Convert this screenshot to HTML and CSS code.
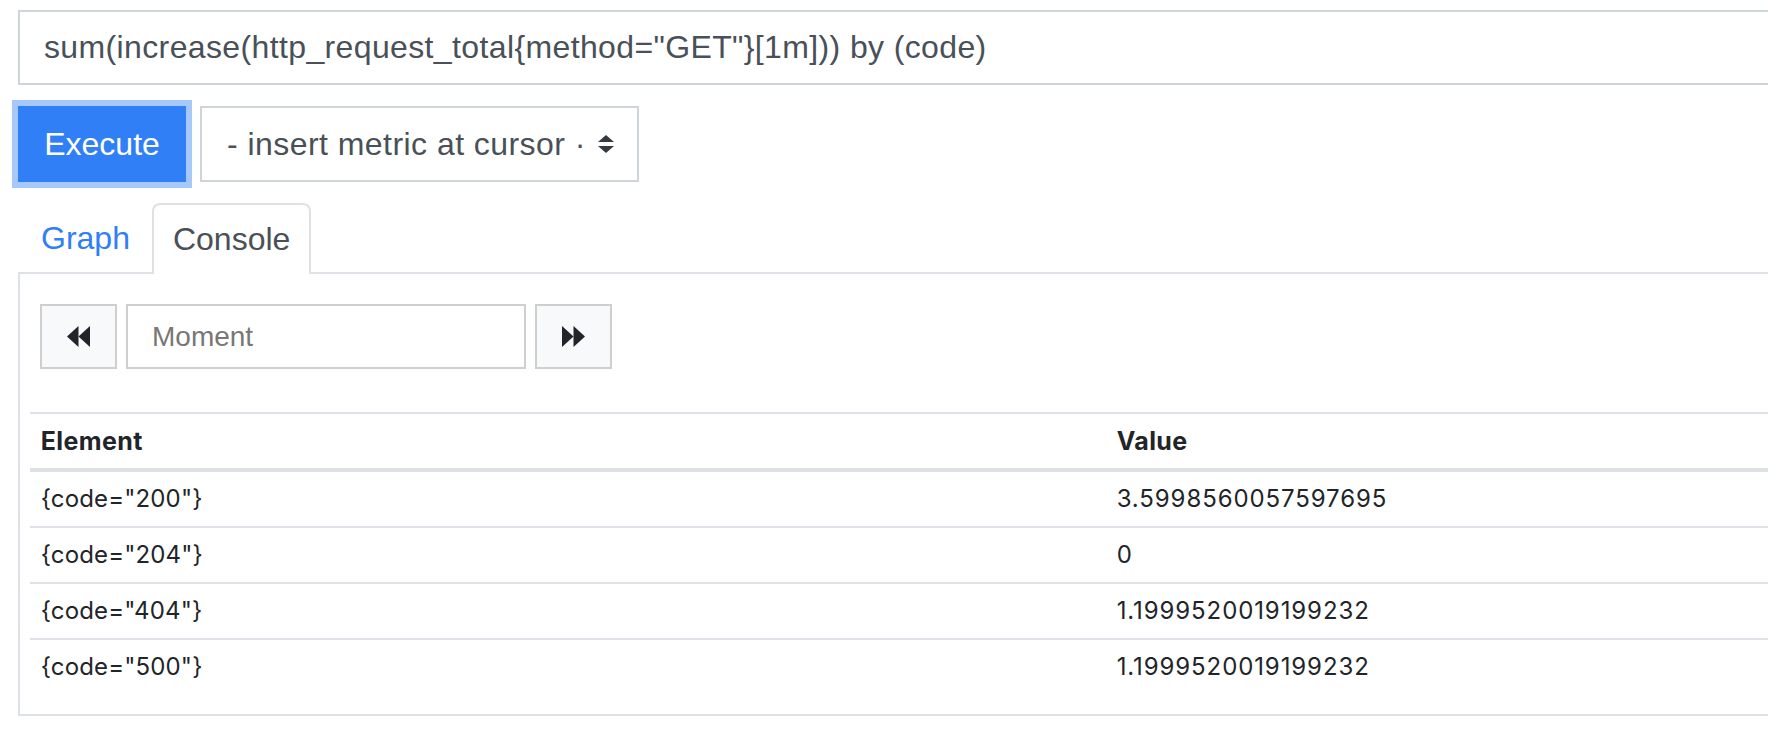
FILE: index.html
```html
<!DOCTYPE html>
<html lang="en">
<head>
<meta charset="utf-8">
<title>Console</title>
<link rel="stylesheet" href="styles.css">
</head>
<body>
<div class="page">
  <div class="query">sum(increase(http_request_total{method="GET"}[1m])) by (code)</div>
  <div class="controls">
    <button class="btn-exec">Execute</button>
    <div class="select">
      <span class="select-text">- insert metric at cursor ·</span>
      <svg class="select-arrows" width="16" height="18" viewBox="0 0 16 18"><polygon points="0,7 8,0 16,7" fill="#343a40"/><polygon points="0,11 16,11 8,18" fill="#343a40"/></svg>
    </div>
  </div>
  <div class="tabs">
    <a class="tab">Graph</a>
    <a class="tab active">Console</a>
  </div>
  <div class="panel">
    <div class="moment-row">
      <button class="nav-btn"><svg width="23" height="21" viewBox="0 0 23 21"><polygon points="0,10.5 11.5,0 11.5,21" fill="#212529"/><polygon points="11.5,10.5 23,0 23,21" fill="#212529"/></svg></button>
      <div class="moment">Moment</div>
      <button class="nav-btn"><svg width="23" height="21" viewBox="0 0 23 21"><polygon points="23,10.5 11.5,0 11.5,21" fill="#212529"/><polygon points="11.5,10.5 0,0 0,21" fill="#212529"/></svg></button>
    </div>
    <table class="results">
      <thead>
        <tr><th class="col-el">Element</th><th>Value</th></tr>
      </thead>
      <tbody>
        <tr><td>{code="200"}</td><td class="num">3.5998560057597695</td></tr>
        <tr><td>{code="204"}</td><td class="num">0</td></tr>
        <tr><td>{code="404"}</td><td class="num">1.1999520019199232</td></tr>
        <tr><td>{code="500"}</td><td class="num">1.1999520019199232</td></tr>
      </tbody>
    </table>
  </div>
</div>
</body>
</html>
```
FILE: styles.css
```css
html, body {
  margin: 0;
  padding: 0;
  overflow: hidden;
  background: #fff;
}
body {
  font-family: "Liberation Sans", Arial, sans-serif;
  color: #212529;
}
.page {
  width: 2300px;
  padding: 10px 0 0 18px;
  box-sizing: border-box;
}
.query {
  height: 75px;
  box-sizing: border-box;
  border: 2px solid #ced4da;
  padding: 0 24px;
  display: flex;
  align-items: center;
  font-size: 32px;
  letter-spacing: 0.37px;
  color: #495057;
  white-space: nowrap;
}
.controls {
  display: flex;
  margin-top: 21px;
  height: 76px;
}
.btn-exec {
  width: 168px;
  height: 76px;
  box-sizing: border-box;
  border: 2px solid #307ff6;
  background: #307ff6;
  color: #fff;
  font-family: "Liberation Sans", Arial, sans-serif;
  font-size: 32px;
  padding: 0 24px;
  box-shadow: 0 0 0 6px #a6c8fa;
  margin: 0;
}
.select {
  margin-left: 14px;
  width: 439px;
  height: 76px;
  box-sizing: border-box;
  border: 2px solid #ced4da;
  display: flex;
  align-items: center;
  padding: 0 0 0 25px;
  font-size: 32px;
  letter-spacing: 0.45px;
  color: #495057;
}
.select-text {
  white-space: nowrap;
}
.select-arrows {
  margin-left: auto;
  margin-right: 23px;
}
.tabs {
  display: flex;
  margin-top: 21px;
  height: 69px;
}
.tab {
  display: flex;
  align-items: center;
  font-size: 32px;
  box-sizing: border-box;
  height: 71px;
  margin-bottom: -2px;
}
.tab:first-child {
  color: #307ff6;
  padding: 0 22px 0 23px;
}
.tab.active {
  color: #495057;
  border: 2px solid #dee2e6;
  border-bottom: none;
  border-radius: 8px 8px 0 0;
  background: #fff;
  padding: 0 19px;
  position: relative;
  z-index: 1;
}
.panel {
  border: 2px solid #dee2e6;
  border-right: none;
  padding: 30px 10px 20px 10px;
}
.moment-row {
  display: flex;
  height: 65px;
  margin-left: 10px;
  gap: 9px;
}
.nav-btn {
  width: 77px;
  height: 65px;
  box-sizing: border-box;
  border: 2px solid #cfcfcf;
  background: #f8f9fa;
  display: flex;
  align-items: center;
  justify-content: center;
  padding: 0;
  margin: 0;
}
.moment {
  width: 400px;
  height: 65px;
  box-sizing: border-box;
  border: 2px solid #cfcfcf;
  padding: 0 24px;
  display: flex;
  align-items: center;
  font-size: 28px;
  color: #777;
}
.results {
  margin-top: 43px;
  border-collapse: collapse;
  width: 2200px;
  font-family: Inter, "Liberation Sans", sans-serif;
  font-size: 24px;
  color: #212529;
}
.results th, .results td {
  text-align: left;
  padding: 9px 10.7px;
  line-height: 36px;
  border-top: 2px solid #dee2e6;
}
.results td {
  letter-spacing: 0.15px;
}
.results td.num {
  letter-spacing: 0.9px;
}
.results th {
  font-weight: 700;
  font-size: 25px;
  letter-spacing: 0.4px;
  border-bottom: 4px solid #dee2e6;
}
.col-el {
  width: 1076px;
  box-sizing: border-box;
}
```
